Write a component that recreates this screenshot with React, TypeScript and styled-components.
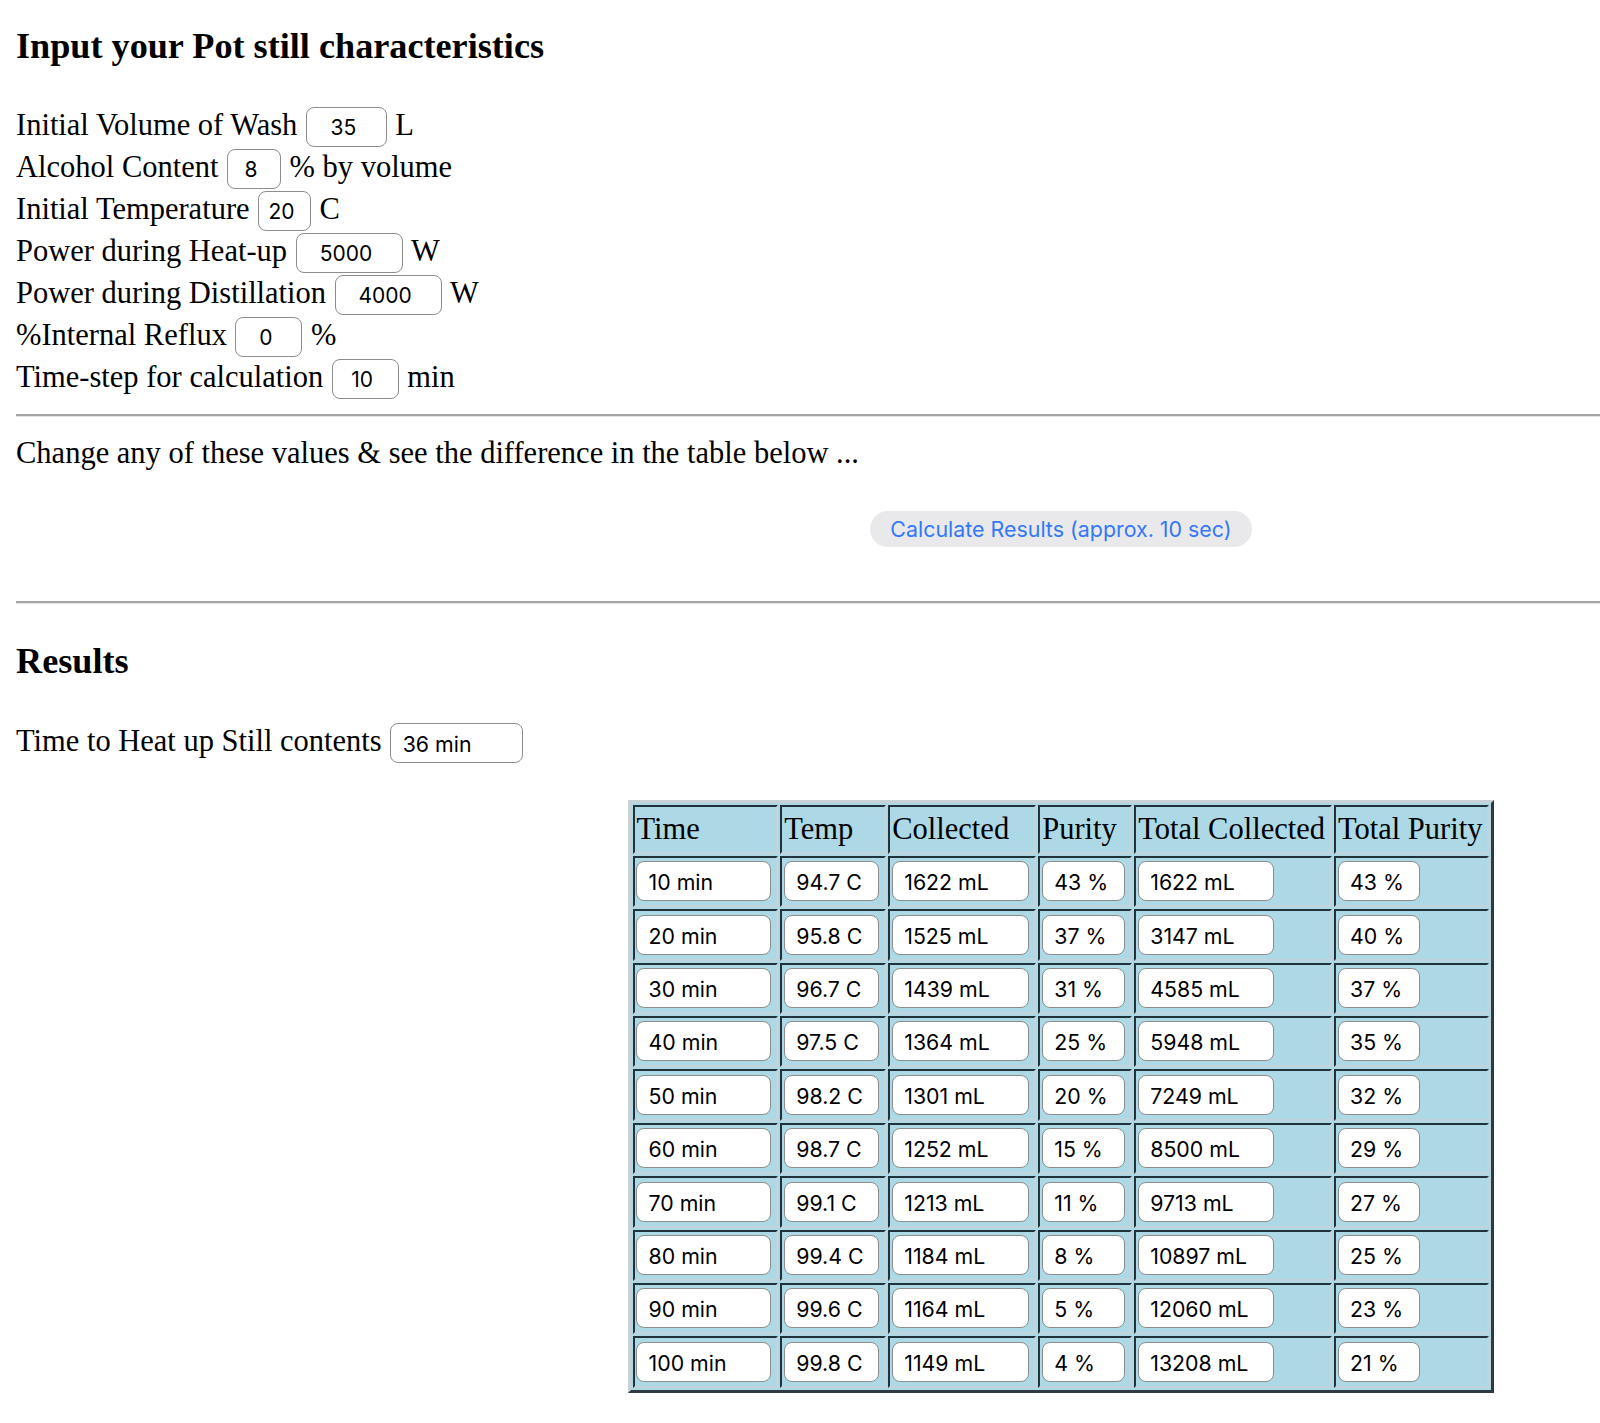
import React from "react";
import styled, { createGlobalStyle } from "styled-components";

const GlobalStyle = createGlobalStyle`
  html, body {
    margin: 0;
    padding: 0;
    overflow: hidden;
    background: #ffffff;
  }
  body {
    font-family: "Liberation Serif", "Times New Roman", serif;
    color: #000000;
  }
`;

const Page = styled.div`
  width: 2090px;
  padding: 0 16px;
`;

const Heading = styled.h3`
  font-size: 36.2px;
  font-weight: 700;
  line-height: 41px;
  margin: 26px 0 0;
`;

const Form = styled.div`
  margin-top: 37px;
  display: flex;
  flex-direction: column;
`;

const FieldRow = styled.div<{ $top?: number }>`
  display: flex;
  align-items: center;
  gap: 8.5px;
  height: 42px;
  font-size: 30.5px;
  line-height: 35px;
  margin-top: ${(p) => (p.$top !== undefined ? `${p.$top}px` : "0")};
`;

const NumberBox = styled.input<{ $w: number }>`
  box-sizing: border-box;
  width: ${(p) => p.$w}px;
  height: 40px;
  margin-top: 3px;
  border: 1.5px solid #8d8d8d;
  border-radius: 8px;
  background: #fff;
  font-family: "Inter", "Liberation Sans", Arial, sans-serif;
  font-size: 21px;
  color: #000;
  text-align: center;
  padding: 2px 8px 0 2px;
  outline: none;
`;

const ValueBox = styled.input<{ $w: number; $shift?: number }>`
  box-sizing: border-box;
  width: ${(p) => p.$w}px;
  height: 40px;
  margin-top: ${(p) => p.$shift ?? 0}px;
  border: 1.5px solid #8d8d8d;
  border-radius: 8px;
  background: #fff;
  font-family: "Inter", "Liberation Sans", Arial, sans-serif;
  font-size: 21.3px;
  color: #000;
  text-align: left;
  padding: 2px 0 0 11.5px;
  outline: none;
  display: block;
`;

const Divider = styled.hr<{ $top: number }>`
  margin: ${(p) => p.$top}px 0 0;
  border: 0;
  height: 0;
  border-top: 2px solid #a4a4a4;
  border-bottom: 1px solid #e4e4e4;
`;

const Note = styled.p`
  margin: 18.5px 0 0;
  font-size: 30.5px;
  line-height: 35px;
`;

const ButtonRow = styled.div`
  display: flex;
  justify-content: center;
  margin-top: 40.5px;
`;

const CalcButton = styled.button`
  box-sizing: border-box;
  width: 382px;
  height: 36px;
  border: 0;
  border-radius: 18px;
  background: #e9e9eb;
  color: #3478f6;
  font-family: "Inter", "Liberation Sans", Arial, sans-serif;
  font-size: 21.4px;
  padding: 0;
  cursor: pointer;
`;

const ResultsHeading = styled.h3`
  font-size: 36.2px;
  font-weight: 700;
  line-height: 41px;
  margin: 37px 0 0;
`;

const TableWrap = styled.div`
  display: flex;
  justify-content: center;
  margin-top: 37px;
`;

const Table = styled.table`
  border-collapse: separate;
  border-spacing: 2px;
  background: #add8e6;
  border-style: solid;
  border-width: 3px;
  border-color: #c9d2d6 #2d3a41 #2d3a41 #c9d2d6;
`;

const HeadCell = styled.td`
  background: #add8e6;
  border-style: solid;
  border-width: 2px;
  border-color: #22323a #c4d3d9 #c4d3d9 #22323a;
  padding: 5px 5px 5px 2px;
  font-size: 30.5px;
  line-height: 35px;
  text-align: left;
  white-space: nowrap;
  font-weight: 400;
`;

const DataCell = styled.td`
  background: #add8e6;
  border-style: solid;
  border-width: 2px;
  border-color: #22323a #c4d3d9 #c4d3d9 #22323a;
  padding: 3.5px 5.5px 3.9px 1.5px;
  vertical-align: top;
`;

const headers = ["Time", "Temp", "Collected", "Purity", "Total Collected", "Total Purity"];
const widths = [134.7, 95, 137, 83, 136, 82];

const rows: string[][] = [
  ["10 min", "94.7 C", "1622 mL", "43 %", "1622 mL", "43 %"],
  ["20 min", "95.8 C", "1525 mL", "37 %", "3147 mL", "40 %"],
  ["30 min", "96.7 C", "1439 mL", "31 %", "4585 mL", "37 %"],
  ["40 min", "97.5 C", "1364 mL", "25 %", "5948 mL", "35 %"],
  ["50 min", "98.2 C", "1301 mL", "20 %", "7249 mL", "32 %"],
  ["60 min", "98.7 C", "1252 mL", "15 %", "8500 mL", "29 %"],
  ["70 min", "99.1 C", "1213 mL", "11 %", "9713 mL", "27 %"],
  ["80 min", "99.4 C", "1184 mL", "8 %", "10897 mL", "25 %"],
  ["90 min", "99.6 C", "1164 mL", "5 %", "12060 mL", "23 %"],
  ["100 min", "99.8 C", "1149 mL", "4 %", "13208 mL", "21 %"],
];

const fields: { label: string; value: string; unit: string; w: number }[] = [
  { label: "Initial Volume of Wash", value: "35", unit: "L", w: 81 },
  { label: "Alcohol Content", value: "8", unit: "% by volume", w: 54 },
  { label: "Initial Temperature", value: "20", unit: "C", w: 53 },
  { label: "Power during Heat-up", value: "5000", unit: "W", w: 107 },
  { label: "Power during Distillation", value: "4000", unit: "W", w: 107 },
  { label: "%Internal Reflux", value: "0", unit: "%", w: 67 },
  { label: "Time-step for calculation", value: "10", unit: "min", w: 67 },
];

export default function App() {
  return (
    <>
      <GlobalStyle />
      <Page>
        <Heading>Input your Pot still characteristics</Heading>
        <Form>
          {fields.map((f) => (
            <FieldRow key={f.label}>
              <span>{f.label}</span>
              <NumberBox $w={f.w} defaultValue={f.value} />
              <span>{f.unit}</span>
            </FieldRow>
          ))}
        </Form>
        <Divider $top={16} />
        <Note>Change any of these values &amp; see the difference in the table below ...</Note>
        <ButtonRow>
          <CalcButton type="button">Calculate Results (approx. 10 sec)</CalcButton>
        </ButtonRow>
        <Divider $top={53.5} />
        <ResultsHeading>Results</ResultsHeading>
        <FieldRow $top={39.3}>
          <span>Time to Heat up Still contents</span>
          <ValueBox $w={133} $shift={3} defaultValue="36 min" readOnly />
        </FieldRow>
        <TableWrap>
          <Table>
            <tbody>
              <tr>
                {headers.map((h) => (
                  <HeadCell key={h}>{h}</HeadCell>
                ))}
              </tr>
              {rows.map((r) => (
                <tr key={r[0]}>
                  {r.map((v, i) => (
                    <DataCell key={i}>
                      <ValueBox $w={widths[i]} defaultValue={v} readOnly />
                    </DataCell>
                  ))}
                </tr>
              ))}
            </tbody>
          </Table>
        </TableWrap>
      </Page>
    </>
  );
}
